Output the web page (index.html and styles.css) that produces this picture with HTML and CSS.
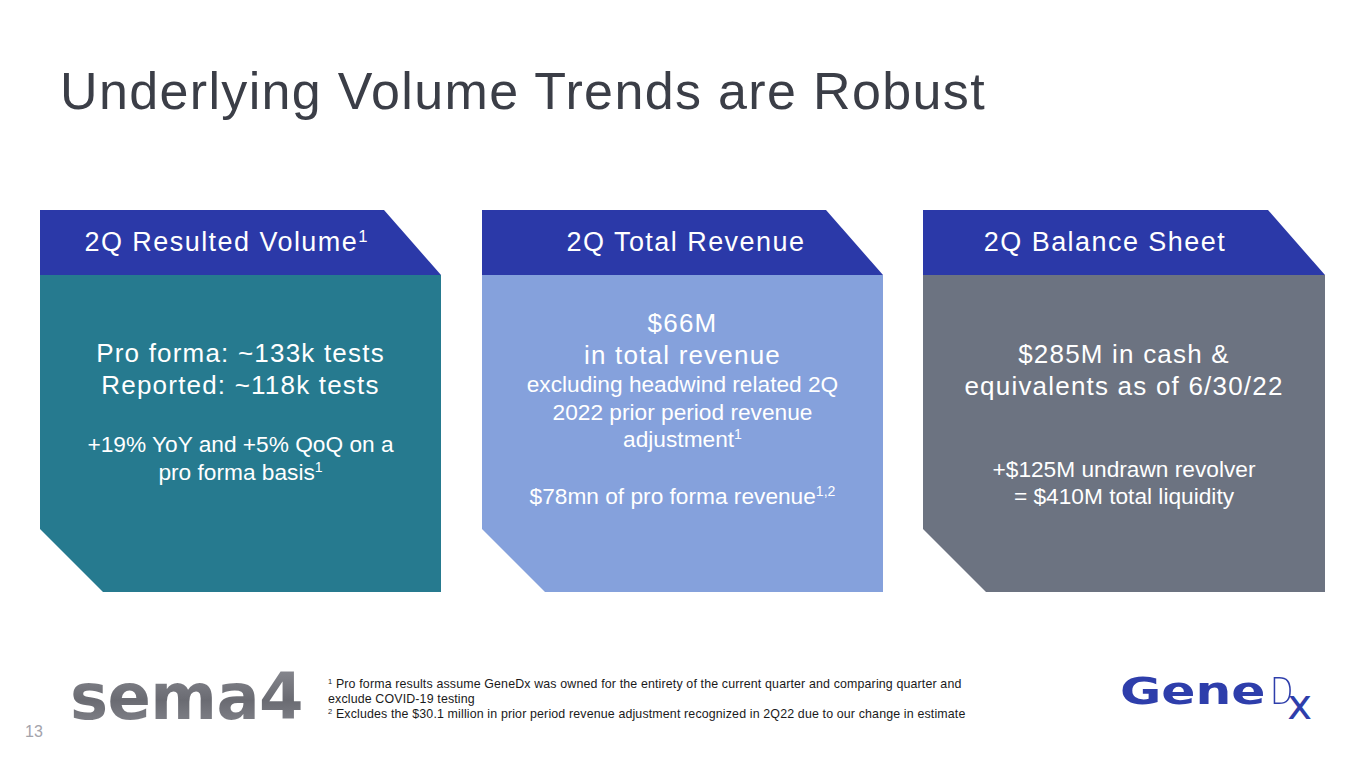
FILE: index.html
```html
<!DOCTYPE html>
<html>
<head>
<meta charset="utf-8">
<title>Underlying Volume Trends are Robust</title>
<link rel="stylesheet" href="styles.css">
</head>
<body>
<div class="slide">
  <h1 class="title">Underlying Volume Trends are Robust</h1>
  <div class="cards">
    <div class="card">
      <div class="card-head head-1">2Q Resulted Volume<span class="sup">1</span></div>
      <div class="card-body body-teal">
        <p class="big">Pro forma: ~133k tests<br>Reported: ~118k tests</p>
        <p class="small gap-1">+19% YoY and +5% QoQ on a<br>pro forma basis<span class="sup">1</span></p>
      </div>
    </div>
    <div class="card">
      <div class="card-head head-2">2Q Total Revenue</div>
      <div class="card-body body-blue">
        <p class="big">$66M<br>in total revenue</p>
        <p class="small">excluding headwind related 2Q<br>2022 prior period revenue<br>adjustment<span class="sup">1</span></p>
        <p class="small gap-2">$78mn of pro forma revenue<span class="sup">1,2</span></p>
      </div>
    </div>
    <div class="card card-last">
      <div class="card-head head-3">2Q Balance Sheet</div>
      <div class="card-body body-gray">
        <p class="big">$285M in cash &amp;<br>equivalents as of 6/30/22</p>
        <p class="small gap-3">+$125M undrawn revolver<br>= $410M total liquidity</p>
      </div>
    </div>
  </div>
  <div class="footer">
    <div class="page-num">13</div>
    <div class="sema4">sema4</div>
    <div class="notes">
      <p class="note"><sup class="nsup">1</sup>Pro forma results assume GeneDx was owned for the entirety of the current quarter and comparing quarter and exclude COVID-19 testing</p>
      <p class="note"><sup class="nsup">2</sup>Excludes the $30.1 million in prior period revenue adjustment recognized in 2Q22 due to our change in estimate</p>
    </div>
    <div class="genedx"><span class="gx-gene">Gene</span><span class="gx-d">D</span><span class="gx-x">x</span></div>
  </div>
</div>
</body>
</html>
```

FILE: styles.css
```css
html, body {
  margin: 0;
  padding: 0;
  background: #ffffff;
}

.slide {
  width: 1365px;
  height: 768px;
  overflow: hidden;
  background: #ffffff;
  font-family: "Liberation Sans", Arial, sans-serif;
}

.title {
  margin: 0;
  padding: 65px 0 0 60px;
  font-size: 52px;
  line-height: 52px;
  font-weight: normal;
  letter-spacing: 1.35px;
  color: #3b3e47;
  white-space: nowrap;
}

.cards {
  display: flex;
  gap: 41px;
  margin: 93px 0 0 40px;
}

.card {
  width: 401px;
  display: flex;
  flex-direction: column;
}

.card-last {
  width: 402px;
  margin-left: -1px;
}

.card-head {
  height: 65px;
  line-height: 65px;
  background: #2b39a8;
  color: #ffffff;
  font-size: 27px;
  letter-spacing: 1.45px;
  text-align: center;
  white-space: nowrap;
  box-sizing: border-box;
  clip-path: polygon(0 0, calc(100% - 57px) 0, 100% 100%, 0 100%);
}

.head-1 { padding-right: 29px; }
.head-2 { padding-left: 7px; }
.head-3 { padding-right: 38px; }

.card-body {
  height: 317px;
  box-sizing: border-box;
  text-align: center;
  color: #ffffff;
  clip-path: polygon(0 0, 100% 0, 100% 100%, 63px 100%, 0 calc(100% - 63px));
}

.body-teal { background: #267a8f; padding-top: 62px; }
.body-blue { background: #85a1dc; padding-top: 32px; }
.body-gray { background: #6c7381; padding-top: 63px; }

.card-body p {
  margin: 0;
}

.big {
  font-size: 26px;
  line-height: 32px;
  letter-spacing: 1.2px;
}

.small {
  font-size: 22.7px;
  line-height: 27.5px;
}

.card-body .gap-1 { margin-top: 30px; }
.card-body .gap-2 { margin-top: 29.5px; }
.card-body .gap-3 { margin-top: 53.75px; }

.sup {
  font-size: 0.62em;
  vertical-align: 0.55em;
  line-height: 0;
  letter-spacing: 0;
}

.footer {
  display: flex;
  align-items: flex-start;
  height: 176px;
}

.page-num {
  margin: 132px 0 0 25px;
  width: 20px;
  font-size: 16px;
  line-height: 16px;
  color: #a3a3ab;
}

.sema4 {
  margin: 73px 0 0 25px;
  width: 232px;
  font-family: "DejaVu Sans", sans-serif;
  font-weight: bold;
  font-size: 64px;
  line-height: 64px;
  letter-spacing: -0.6px;
  white-space: nowrap;
  background: linear-gradient(180deg, #8a8b92 0%, #6a6b72 55%, #84858c 100%);
  -webkit-background-clip: text;
  background-clip: text;
  color: transparent;
}

.notes {
  margin: 84.5px 0 0 26px;
  width: 655px;
  font-size: 12.4px;
  line-height: 15px;
  letter-spacing: 0.15px;
  color: #1a1a1a;
}

.note {
  margin: 0;
}

.nsup {
  font-size: 7.5px;
  vertical-align: 3.5px;
  line-height: 1;
  margin-right: 3.6px;
}

.genedx {
  margin: 79.3px 53px 0 auto;
  white-space: nowrap;
  color: #2e3eab;
  font-family: "DejaVu Sans", sans-serif;
  line-height: 40px;
}

.gx-gene {
  display: inline-block;
  font-weight: bold;
  font-size: 37px;
  transform: scaleX(1.36);
  transform-origin: left center;
  margin-right: 43px;
}

.gx-d {
  display: inline-block;
  font-weight: 200;
  font-size: 38px;
  transform: scaleX(0.8);
  transform-origin: left center;
  margin-right: -5.8px;
}

.gx-x {
  display: inline-block;
  font-size: 42px;
  vertical-align: -15px;
  margin-left: -6px;
}
```
